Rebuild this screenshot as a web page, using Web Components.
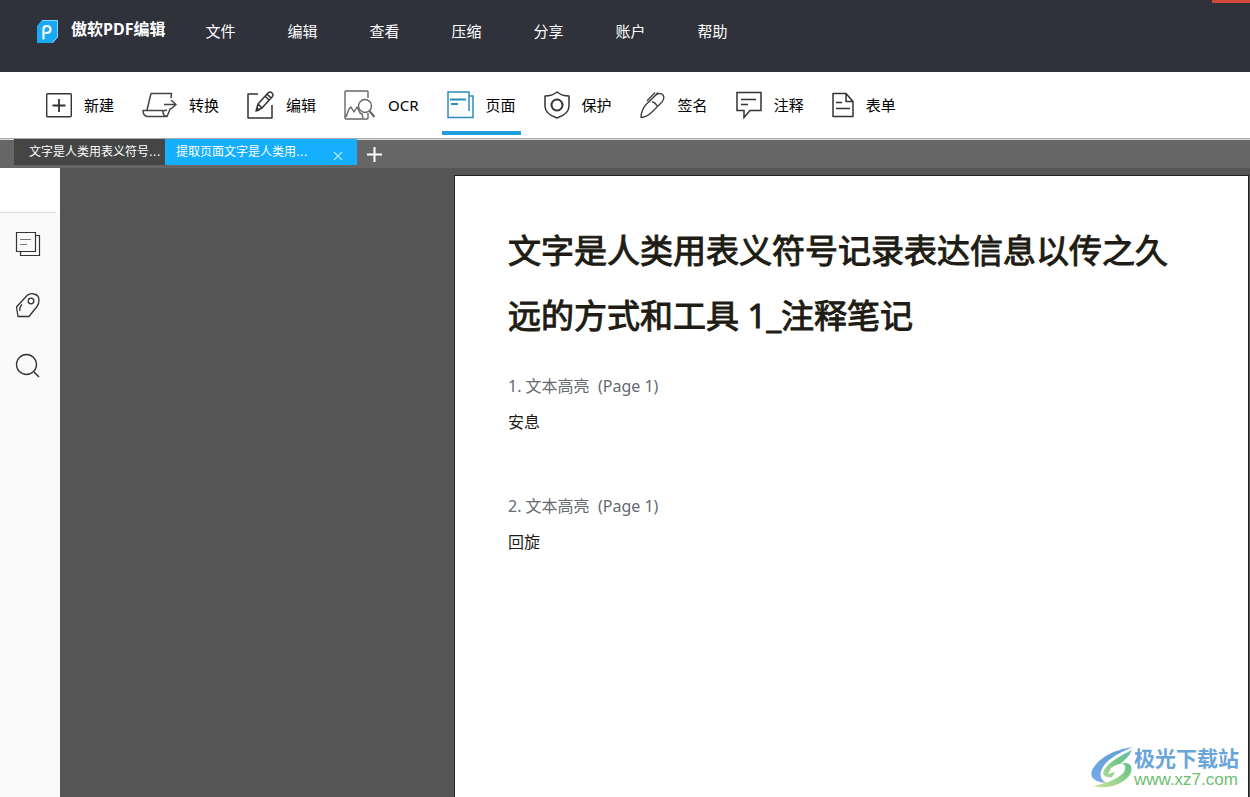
<!DOCTYPE html>
<html lang="zh-CN">
<head>
<meta charset="utf-8">
<title>傲软PDF编辑</title>
<style>
html, body { margin: 0; }
body { font-family: "Noto Sans", "Noto Sans CJK SC", sans-serif; font-size: 15px; color: #111; }
</style>
</head>
<body>
<pdf-app></pdf-app>

<template id="t-app">
<style>
:host { display: flex; flex-direction: column; min-height: 100vh; position: relative; background: #555; }
main { flex: 1; display: flex; }
site-mark { position: absolute; right: 11px; bottom: 7px; }
</style>
<app-header></app-header>
<tool-bar>
  <tool-button label="新建"><svg width="26" height="28" viewBox="0 0 26 28" fill="none" stroke="#333" stroke-width="1.4"><rect x=".7" y="2.7" width="24.6" height="23" rx="1"/><path d="M13 8v13M6.500 14.500h13" stroke-width="1.800"/></svg></tool-button>
  <tool-button label="转换"><svg width="35" height="28" viewBox="0 0 35 28" fill="none" stroke="#444" stroke-width="1.500" stroke-linejoin="round"><path d="M29 7l.5-4.500H9L5 19M28.500 17l-3.500 8.500H5q-4-1-4-6h20q-.5 5 4 6M21 20l4-1M22 13.500h12M29 9l5 4.500-5 4.500"/></svg></tool-button>
  <tool-button label="编辑"><svg width="27" height="28" viewBox="0 0 27 28" fill="none" stroke="#333" stroke-width="1.500" stroke-linejoin="round"><path d="M11 3H1v24h24V14M9 20l2-7L21 2q2-2 4 0 2 2 0 4L15 17zM18 5l4 4M20 3l4 4M11 13l4 4M9 20l3-1-2-2z"/></svg></tool-button>
  <tool-button label="OCR"><svg width="32" height="30" viewBox="0 0 32 30" fill="none" stroke="#666" stroke-width="1.400" stroke-linejoin="round"><path d="M24 8V2q0-1-1-1H2Q1 1 1 2v26q0 1 1 1h21q1 0 1-1v-5M2 27l3-8 2-2 3 5 3-5 3 6 2 1 1 4"/><circle cx="21" cy="16" r="6.500"/><path d="M25.500 21l5 6" stroke-width="2"/></svg></tool-button>
  <tool-button label="页面" active><svg width="27" height="28" viewBox="0 0 27 28" fill="none" stroke="#2b8db8" stroke-width="1.500"><path d="M22 20V1H1v25.500h25V5h-4"/><path d="M3 8.500h16M4 13h7" stroke-width="1.800"/></svg></tool-button>
  <tool-button label="保护"><svg width="26" height="28" viewBox="0 0 26 28" fill="none" stroke="#333" stroke-width="1.500" stroke-linejoin="round"><path d="M13 1q5 4 12 4v10q0 8-12 12Q1 23 1 15V5q7 0 12-4z"/><circle cx="13" cy="14" r="5.500" stroke-width="2"/></svg></tool-button>
  <tool-button label="签名"><svg width="26" height="28" viewBox="0 0 26 28" fill="none" stroke="#444" stroke-width="1.400" stroke-linejoin="round"><path d="M1 26.500q0-7 5-13L16 4q4-3 7 0 2 3-1 7L12 21q-5 5-11 5.500zM12 11q3 0 5 4M7 10l8-8.500M9 11l9-9.500"/></svg></tool-button>
  <tool-button label="注释"><svg width="26" height="28" viewBox="0 0 26 28" fill="none" stroke="#333" stroke-width="1.500"><path d="M1 1.500h24v18H14l-6 7v-7H1z"/><path d="M5 8.500h15M5 13.500h7"/></svg></tool-button>
  <tool-button label="表单"><svg width="22" height="28" viewBox="0 0 22 28" fill="none" stroke="#333" stroke-width="1.500" stroke-linejoin="round"><path d="M14 2.500H1v23h20v-15zM14 2.500v8h7"/><path d="M4 11.500h6M4 17.500h14"/></svg></tool-button>
</tool-bar>
<tab-strip></tab-strip>
<main>
  <side-panel></side-panel>
  <doc-page>
    <span slot="title">文字是人类用表义符号记录表达信息以传之久远的方式和工具 1_注释笔记</span>
    <doc-note heading="1. 文本高亮&nbsp; (Page 1)">安息</doc-note>
    <doc-note heading="2. 文本高亮&nbsp; (Page 1)">回旋</doc-note>
  </doc-page>
</main>
<site-mark></site-mark>
</template>

<template id="t-header">
<style>
:host { display: flex; height: 72px; background: #30323b; color: #fff; padding-left: 37px; }
.brand { display: flex; align-items: center; gap: 13px; height: 62px; }
b { font-size: 16px; line-height: 22px; padding-bottom: 4px; }
nav { display: flex; align-items: center; gap: 52px; height: 62px; margin-left: 40px; }
button { all: unset; line-height: 22px; white-space: nowrap; cursor: pointer; }
.close { margin-left: auto; width: 38px; height: 3px; background: #d04a3c; }
</style>
<div class="brand">
<svg width="21" height="23" viewBox="0 0 21 23"><path d="M5 0h16v17l-5 6H0V6z" fill="#1aa9f5"/><path d="M5 .500h15.500V17l-5 5.500" fill="none" stroke="#8bd5fb"/><path d="M6.500 18.500V11M6.500 10V9q0-3 3.500-3t3.500 3.500Q13.500 13 9 13" fill="none" stroke="#fff" stroke-width="2.200" stroke-linecap="round"/></svg>
<b>傲软PDF编辑</b></div>
<nav><button>文件</button><button>编辑</button><button>查看</button><button>压缩</button><button>分享</button><button>账户</button><button>帮助</button></nav>
<button class="close" aria-label="关闭"></button>
</template>

<template id="t-toolbar">
<style>:host { display: flex; gap: 18px; height: 66px; padding-left: 41px; background: #fff; }</style>
<slot></slot>
</template>

<template id="t-tool">
<style>
:host { display: flex; }
button { all: unset; display: flex; align-items: center; gap: 12px; height: 59px; padding: 6px 5px 0; box-sizing: border-box; border-bottom: 0 solid #1f9fdb; white-space: nowrap; line-height: 22px; cursor: pointer; color: #000; }
:host([active]) button { height: 63px; border-bottom-width: 4px; }
slot { display: flex; }
</style>
<button><slot></slot><span></span></button>
</template>

<template id="t-tabs">
<style>
:host { display: flex; height: 29px; padding-left: 14px; border-top: 1px solid #aaa; background: linear-gradient(#ddd 1px, #666 1px); font: 12px/26px "DejaVu Sans", "Noto Sans CJK SC", sans-serif; color: #fff; }
button { all: unset; cursor: pointer; }
.tab { box-sizing: border-box; height: 26px; white-space: nowrap; background: #454545; width: 151px; padding: 1px 0 0 15px; line-height: 25px; }
.on { display: flex; align-items: center; width: 192px; padding-left: 11px; background: #16aeff; }
.on .name { width: 157px; }
.on .x { display: flex; padding-top: 6px; }
.add { display: flex; align-items: center; margin-left: 10px; height: 30px; }
</style>
<button class="tab">文字是人类用表义符号...</button>
<div class="tab on"><button class="name">提取页面文字是人类用...</button><button class="x" aria-label="关闭标签"><svg width="10" height="10" viewBox="0 0 10 10" stroke="#aee4ff" stroke-width="1.200"><path d="M1 1l8 8M9 1L1 9"/></svg></button></div>
<button class="add" aria-label="新标签"><svg width="15" height="15" viewBox="0 0 15 15" stroke="#fff" stroke-width="2"><path d="M7.500 0v15M0 7.500h15"/></svg></button>
</template>

<template id="t-side">
<style>
:host { display: flex; flex-direction: column; width: 60px; flex: none; background: #fafafa; }
.head { height: 44px; background: linear-gradient(#ddd, #ddd) 0 100% / 56px 1px no-repeat #fff; padding-bottom: 1px; }
nav { display: flex; flex-direction: column; gap: 33px; padding: 17px 0 0 14px; }
button { all: unset; display: flex; width: 28px; height: 28px; cursor: pointer; }
</style>
<div class="head"></div>
<nav>
<button aria-label="缩略图"><svg width="28" height="28" viewBox="0 0 28 28" fill="none" stroke="#333" stroke-width="1.200"><path d="M2.500 2.500h19v19h-19zM21.500 5.500h4v20h-19v-4"/><path d="M6 9.500h11M6 14.500h7" stroke="#777"/></svg></button>
<button aria-label="书签"><svg width="28" height="28" viewBox="0 0 28 28" fill="none" stroke="#333" stroke-width="1.300" stroke-linejoin="round"><path d="M2.500 16L13 4.500q3-2.500 7-1.500 5 1 5 6 0 4-2 6.500L15 25.500H4z"/><circle cx="17" cy="10" r="2.800"/><path d="M6 20q-1-3 2-6.500"/></svg></button>
<button aria-label="搜索"><svg width="28" height="28" viewBox="0 0 28 28" fill="none" stroke="#333" stroke-width="1.300"><circle cx="12.500" cy="12.500" r="10"/><path d="M20 20l5 5" stroke-width="1.600"/></svg></button>
</nav>
</template>

<template id="t-page">
<style>
:host { display: block; box-sizing: border-box; width: 795px; margin: 7px 1px 0 auto; padding: 42px 53px 0; border: 1px solid #222; border-bottom: 0; background: #fff; color: #1e1c14; }
h1 { margin: 0 0 20px; font-size: 33px; line-height: 65px; font-weight: 400; -webkit-text-stroke: 1px #1e1c14; }
.notes { display: flex; flex-direction: column; gap: 48px; }
</style>
<h1><slot name="title"></slot></h1>
<div class="notes"><slot></slot></div>
</template>

<template id="t-note">
<style>
:host { display: block; font-size: 16px; line-height: 36px; }
h2, p { margin: 0; font-size: 16px; font-weight: 400; }
h2 { color: #666a70; }
</style>
<h2></h2><p><slot></slot></p>
</template>

<template id="t-mark">
<style>
:host { display: flex; align-items: center; }
.txt { display: flex; flex-direction: column; white-space: nowrap; }
.cn { font-size: 21px; line-height: 24px; font-weight: 700; color: #69a5db; }
a { font: 17px/20px "Liberation Sans", sans-serif; color: #6cc070; text-decoration: none; }
</style>
<svg width="43" height="42" viewBox="0 0 43 42"><defs><linearGradient id="g" x1="0" y1="0" x2="0" y2="1"><stop offset="0" stop-color="#5fa0d8"/><stop offset="1" stop-color="#79a9e8"/></linearGradient><linearGradient id="h" x1="0" y1="1" x2="1" y2="0"><stop offset="0" stop-color="#cfe69a"/><stop offset=".7" stop-color="#6fc686"/><stop offset="1" stop-color="#68b8b8"/></linearGradient></defs>
<path d="M42 0Q20 3 8 14-2 24 1 30q3 5 14 6-7-4-5-12Q14 11 42 0z" fill="url(#g)"/>
<path d="M41 3Q18 14 13 23q-2 4 1 6 3 2 7 1l3-5-7 2 3-6q8-5 12-4 4 2 1 8-7 9-31 14 15 4 29-4 12-8 9-16-3-5-11-2Q38 10 41 3z" fill="url(#h)"/></svg>
<div class="txt"><span class="cn">极光下载站</span><a href="#">www.xz7.com</a></div>
</template>

<script>
const define = (name, id, setup) => customElements.define(name, class extends HTMLElement {
  constructor() {
    super();
    this.attachShadow({ mode: 'open' }).append(document.getElementById(id).content.cloneNode(true));
  }
  connectedCallback() { if (setup) setup(this, this.shadowRoot); }
});
define('app-header', 't-header');
define('tool-bar', 't-toolbar');
define('tool-button', 't-tool', (el, root) => { root.querySelector('span').textContent = el.getAttribute('label'); });
define('tab-strip', 't-tabs');
define('side-panel', 't-side');
define('doc-page', 't-page');
define('doc-note', 't-note', (el, root) => { root.querySelector('h2').textContent = el.getAttribute('heading'); });
define('site-mark', 't-mark');
define('pdf-app', 't-app');
</script>
</body>
</html>
